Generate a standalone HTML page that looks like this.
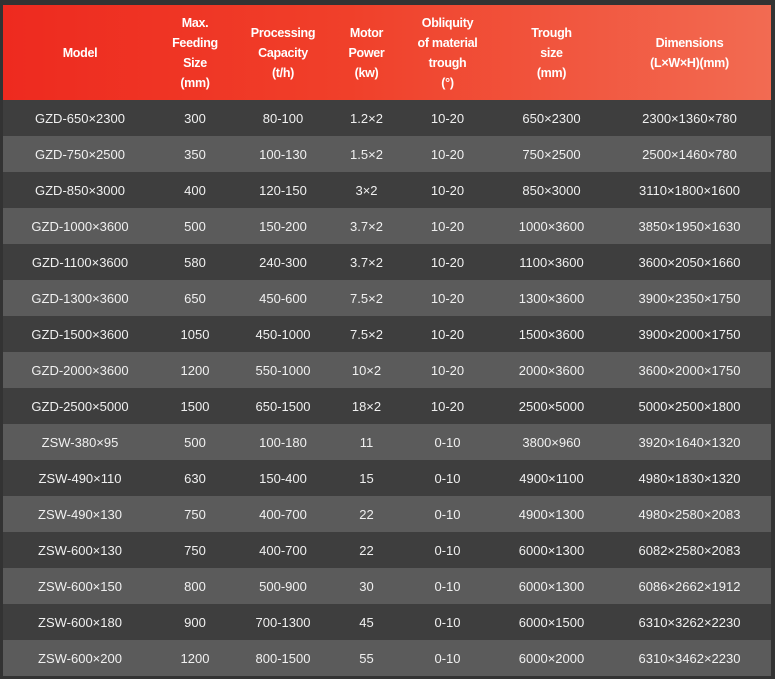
<!DOCTYPE html><html><head><style>
body{margin:0;background:#333;width:775px;height:679px;overflow:hidden;font-family:"Liberation Sans",Arial,sans-serif}
table{position:absolute;left:3px;top:5px;width:768px;border-collapse:collapse;table-layout:fixed}
th{height:95px;color:#fff;font-size:12.5px;font-weight:bold;line-height:20px;padding:0;text-align:center;letter-spacing:-0.3px}
thead tr{background:linear-gradient(90deg,#ee2a1f 0%,#f0402a 45%,#f26b52 100%)}
td{height:36px;padding:0;text-align:center;color:#f0f0f0;font-size:13px}
tbody tr:nth-child(odd){background:#3e3e3e}
tbody tr:nth-child(even){background:#5b5b5b}
</style></head><body>
<table>
<colgroup><col style="width:154px"><col style="width:76px"><col style="width:100px"><col style="width:67px"><col style="width:95px"><col style="width:113px"><col style="width:163px"></colgroup>
<thead><tr><th>Model</th><th>Max.<br>Feeding<br>Size<br>(mm)</th><th>Processing<br>Capacity<br>(t/h)</th><th>Motor<br>Power<br>(kw)</th><th>Obliquity<br>of material<br>trough<br>(°)</th><th>Trough<br>size<br>(mm)</th><th>Dimensions<br>(L×W×H)(mm)</th></tr></thead>
<tbody>
<tr><td>GZD-650×2300</td><td>300</td><td>80-100</td><td>1.2×2</td><td>10-20</td><td>650×2300</td><td>2300×1360×780</td></tr>
<tr><td>GZD-750×2500</td><td>350</td><td>100-130</td><td>1.5×2</td><td>10-20</td><td>750×2500</td><td>2500×1460×780</td></tr>
<tr><td>GZD-850×3000</td><td>400</td><td>120-150</td><td>3×2</td><td>10-20</td><td>850×3000</td><td>3110×1800×1600</td></tr>
<tr><td>GZD-1000×3600</td><td>500</td><td>150-200</td><td>3.7×2</td><td>10-20</td><td>1000×3600</td><td>3850×1950×1630</td></tr>
<tr><td>GZD-1100×3600</td><td>580</td><td>240-300</td><td>3.7×2</td><td>10-20</td><td>1100×3600</td><td>3600×2050×1660</td></tr>
<tr><td>GZD-1300×3600</td><td>650</td><td>450-600</td><td>7.5×2</td><td>10-20</td><td>1300×3600</td><td>3900×2350×1750</td></tr>
<tr><td>GZD-1500×3600</td><td>1050</td><td>450-1000</td><td>7.5×2</td><td>10-20</td><td>1500×3600</td><td>3900×2000×1750</td></tr>
<tr><td>GZD-2000×3600</td><td>1200</td><td>550-1000</td><td>10×2</td><td>10-20</td><td>2000×3600</td><td>3600×2000×1750</td></tr>
<tr><td>GZD-2500×5000</td><td>1500</td><td>650-1500</td><td>18×2</td><td>10-20</td><td>2500×5000</td><td>5000×2500×1800</td></tr>
<tr><td>ZSW-380×95</td><td>500</td><td>100-180</td><td>11</td><td>0-10</td><td>3800×960</td><td>3920×1640×1320</td></tr>
<tr><td>ZSW-490×110</td><td>630</td><td>150-400</td><td>15</td><td>0-10</td><td>4900×1100</td><td>4980×1830×1320</td></tr>
<tr><td>ZSW-490×130</td><td>750</td><td>400-700</td><td>22</td><td>0-10</td><td>4900×1300</td><td>4980×2580×2083</td></tr>
<tr><td>ZSW-600×130</td><td>750</td><td>400-700</td><td>22</td><td>0-10</td><td>6000×1300</td><td>6082×2580×2083</td></tr>
<tr><td>ZSW-600×150</td><td>800</td><td>500-900</td><td>30</td><td>0-10</td><td>6000×1300</td><td>6086×2662×1912</td></tr>
<tr><td>ZSW-600×180</td><td>900</td><td>700-1300</td><td>45</td><td>0-10</td><td>6000×1500</td><td>6310×3262×2230</td></tr>
<tr><td>ZSW-600×200</td><td>1200</td><td>800-1500</td><td>55</td><td>0-10</td><td>6000×2000</td><td>6310×3462×2230</td></tr>
</tbody></table>
</body></html>
